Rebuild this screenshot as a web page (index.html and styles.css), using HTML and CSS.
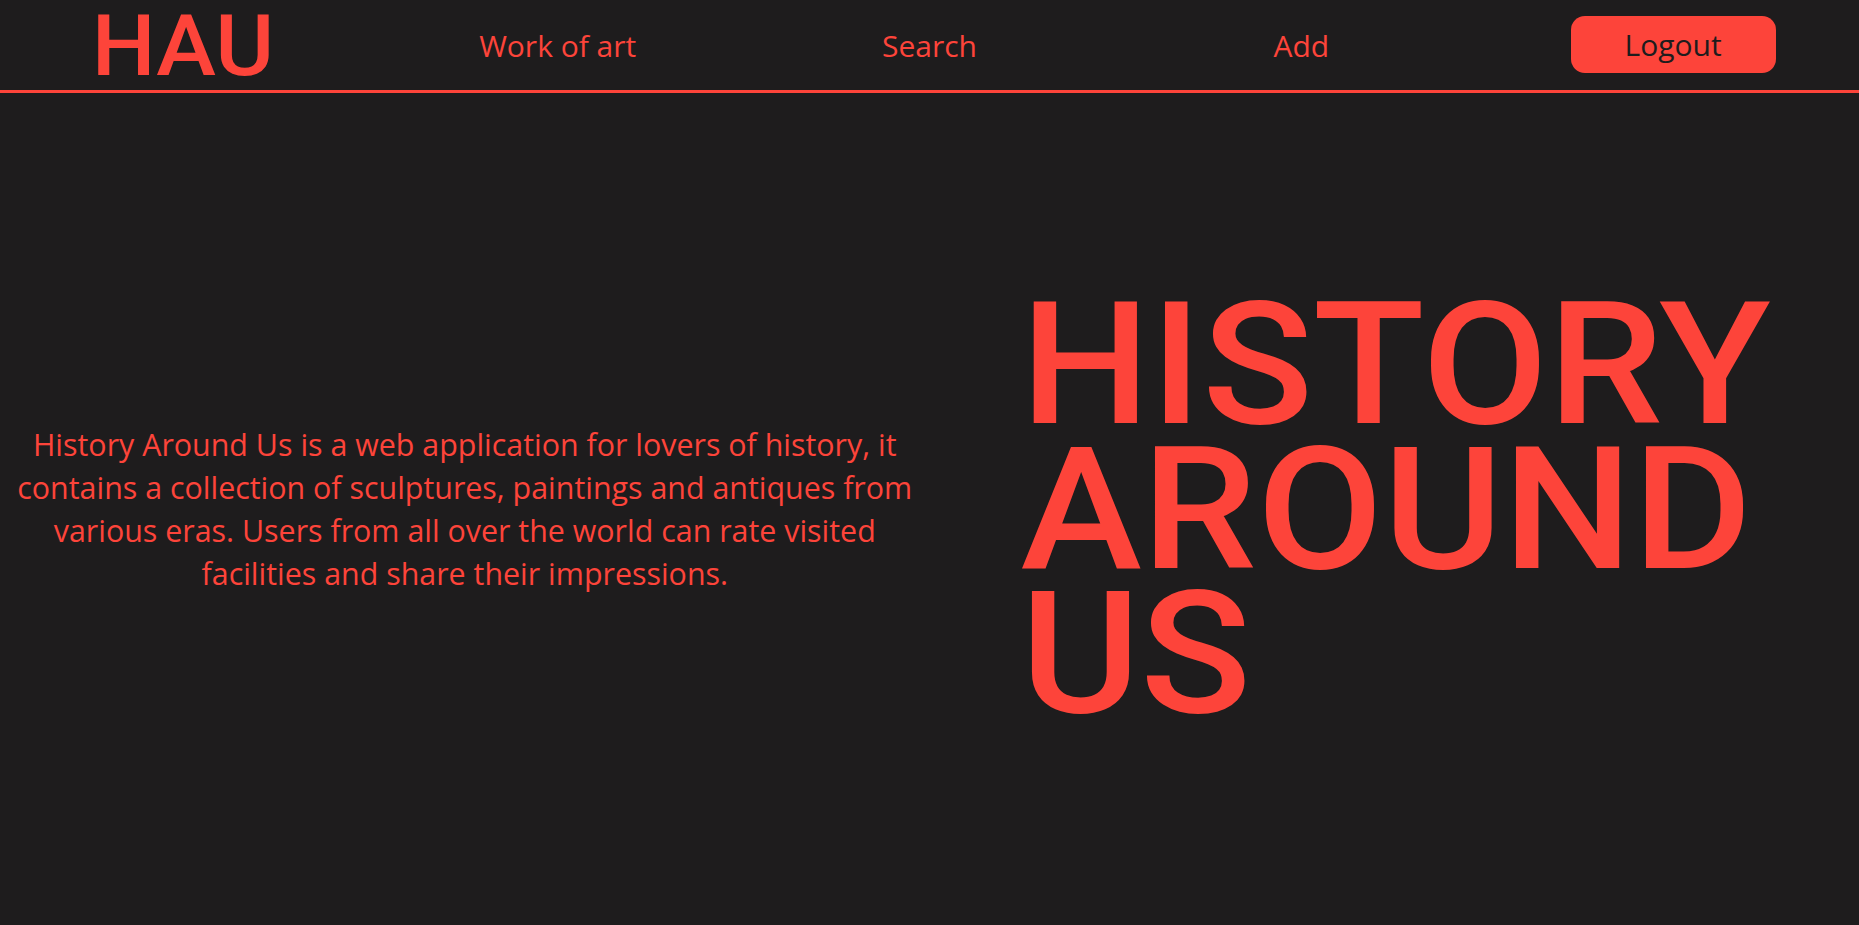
FILE: index.html
```html
<!DOCTYPE html>
<html lang="en">
<head>
<meta charset="utf-8">
<title>History Around Us</title>
<link rel="stylesheet" href="styles.css">
</head>
<body>
<header class="header">
  <div class="cell"><a class="logo" href="#">HAU</a></div>
  <div class="cell"><a class="nav-link" href="#">Work of art</a></div>
  <div class="cell"><a class="nav-link" href="#">Search</a></div>
  <div class="cell"><a class="nav-link" href="#">Add</a></div>
  <div class="cell"><button class="logout" type="button">Logout</button></div>
</header>
<main class="hero">
  <section class="about">
    <p class="about-text">History Around Us is a web application for lovers of history, it contains a collection of sculptures, paintings and antiques from various eras. Users from all over the world can rate visited facilities and share their impressions.</p>
  </section>
  <section class="title-col">
    <h1 class="title">HISTORY AROUND US</h1>
  </section>
</main>
</body>
</html>
```
FILE: styles.css
```css
* { box-sizing: border-box; }
html, body { margin: 0; padding: 0; }
body {
  background: #1e1c1d;
  color: #fd443a;
  font-family: "Open Sans", "Noto Sans", sans-serif;
  height: 925px;
  overflow: hidden;
}
.header {
  display: flex;
  height: 93px;
  border-bottom: 3px solid #fd443a;
  align-items: center;
}
.cell {
  flex: 1 1 0;
  min-width: 0;
  display: flex;
  justify-content: center;
  align-items: center;
}
.logo {
  display: block;
  font-family: Roboto, "Liberation Sans", sans-serif;
  font-size: 90px;
  line-height: 90px;
  font-weight: 500;
  color: #fd443a;
  text-decoration: none;
  margin-right: 6px;
  transform: scaleY(0.94);
  transform-origin: 50% 80%;
}
.nav-link {
  font-size: 30px;
  color: #fd443a;
  text-decoration: none;
  margin-top: 1px;
}
.logout {
  width: 205px;
  height: 57px;
  border: none;
  border-radius: 14px;
  background: #fd443a;
  color: #1e1c1d;
  font-family: "Open Sans", "Noto Sans", sans-serif;
  font-size: 30px;
  padding: 0;
  margin-top: -1px;
  cursor: pointer;
}
.hero {
  display: flex;
  height: 832px;
}
.about {
  flex: 0 0 50%;
  min-width: 0;
  display: flex;
  align-items: center;
  justify-content: center;
  padding: 0 12px;
}
.about-text {
  margin: 0;
  text-align: center;
  font-size: 30.4px;
  line-height: 43px;
}
.title-col {
  flex: 0 0 50%;
  min-width: 0;
  display: flex;
  align-items: center;
  padding-left: 91px;
}
.title {
  margin: 1px 0 0;
  font-family: Roboto, "Liberation Sans", sans-serif;
  font-weight: 500;
  font-size: 183px;
  line-height: 155px;
  transform: scaleY(0.93);
  transform-origin: 50% 50%;
}
```
